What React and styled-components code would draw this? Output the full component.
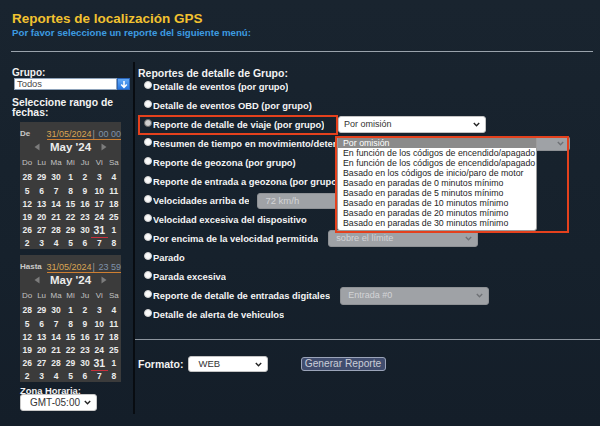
import React from 'react';
import styled, { createGlobalStyle } from 'styled-components';

const FONT = `"Liberation Sans", Arial, sans-serif`;

const GlobalStyle = createGlobalStyle`
  html, body { margin: 0; padding: 0; }
  body { background: #17222e; font-family: ${FONT}; }
  #root { width: 600px; height: 426px; }
`;

const Page = styled.div`
  width: 600px;
  height: 426px;
  overflow: hidden;
  background: linear-gradient(180deg, #19242f 0%, #16212c 60%, #141e29 100%);
  font-family: ${FONT};
`;

const Header = styled.header`
  padding: 11px 7px 0 12px;
`;

const Title = styled.h1`
  margin: 0;
  font: bold 13.5px/16px ${FONT};
  color: #f2c230;
`;

const Subtitle = styled.p`
  margin: 0;
  font: bold 9.7px/11px ${FONT};
  color: #3d9be0;
`;

const Rule = styled.div`
  margin: 13px 7px 0 11px;
  height: 1px;
  background: #9aa3ac;
`;

const Main = styled.div`
  display: grid;
  grid-template-columns: 133px 2px 1fr;
  margin-top: 10px;
  height: 352px;
`;

const Divider = styled.div`
  background: #080c11;
`;

/* ---------- left column ---------- */
const LeftCol = styled.aside`
  padding: 6px 0 0 12px;
  display: flex;
  flex-direction: column;
  align-items: flex-start;
`;

const SideLabel = styled.div`
  font: bold ${p => p.$fs || 10}px/${p => p.$lh || 10}px ${FONT};
  color: #f2f2f2;
  margin-top: ${p => p.$mt || 0}px;
  margin-left: ${p => p.$ml || 0}px;
`;

const GroupSelect = styled.div`
  display: flex;
  width: 116px;
  height: 12px;
  margin-left: 2px;
`;

const GroupField = styled.div`
  flex: 1;
  box-sizing: border-box;
  background: #fff;
  border: 1px solid #8fa3ba;
  font: 9.4px/10px ${FONT};
  color: #4a4a4a;
  padding-left: 2px;
`;

const GroupButton = styled.div`
  width: 13px;
  display: flex;
  align-items: center;
  justify-content: center;
  background: linear-gradient(180deg, #62a8f5 0%, #2576e0 100%);
  border: 1px solid #2a64b8;
  box-sizing: border-box;
`;

const CalBox = styled.div`
  width: 101px;
  height: 127px;
  margin: ${p => p.$mt}px 0 0 8px;
  background: #3b3b3b;
  display: flex;
  flex-direction: column;
`;

const CalHead = styled.div`
  height: 18px;
  flex: none;
  display: flex;
  align-items: flex-end;
`;

const CalHeadLabel = styled.span`
  width: 29px;
  font: bold 8px/10px ${FONT};
  color: #c9c9c9;
  padding-bottom: 1px;
`;

const DateField = styled.span`
  flex: 1;
  border-bottom: 1px solid #cf7f31;
  font: 9px/10px ${FONT};
  white-space: nowrap;
  color: #7f92aa;
`;

const DateText = styled.span`
  color: #d9a553;
`;

const Sep = styled.span`
  color: #9a9a9a;
  margin: 0 1px;
`;

const MonthRow = styled.div`
  height: 15px;
  flex: none;
  display: flex;
  align-items: center;
  justify-content: center;
  gap: 10px;
`;

const Month = styled.span`
  font: bold 11.5px/12px ${FONT};
  color: #ebebeb;
`;

const DayNames = styled.div`
  height: 16.5px;
  flex: none;
  display: grid;
  grid-template-columns: repeat(7, 1fr);
  align-items: center;
  text-align: center;
  font: 8px/10px ${FONT};
  color: #c2c2c2;
`;

const DateGrid = styled.div`
  display: grid;
  grid-template-columns: repeat(7, 1fr);
  grid-template-rows: repeat(6, 13.2px);
  text-align: center;
  font: bold 8.5px/13.2px ${FONT};
  color: #ececec;
`;

const DateCell = styled.span`
  position: relative;
  font-size: ${p => (p.$today ? 10.5 : 8.5)}px;
  &::after {
    content: '';
    display: ${p => (p.$today ? 'block' : 'none')};
    position: absolute;
    left: -1px;
    right: -1px;
    bottom: -1px;
    height: 1.5px;
    background: #c8303c;
  }
`;

const TzSelect = styled.div`
  box-sizing: border-box;
  width: 77px;
  height: 17px;
  margin: -1px 0 0 8px;
  background: #fff;
  border: 1px solid #c9c9c9;
  border-radius: 3px;
  display: flex;
  align-items: center;
  justify-content: space-between;
  padding: 0 5px 0 9px;
  font: 10px/1 ${FONT};
  color: #333;
`;

/* ---------- right column ---------- */
const RightCol = styled.section`
  padding-top: 6px;
  display: flex;
  flex-direction: column;
`;

const ReportTitle = styled.h2`
  margin: 0 0 -1px 3px;
  font: bold 10.5px/10px ${FONT};
  color: #f2f2f2;
`;

const Row = styled.div`
  height: 19px;
  flex: none;
  display: flex;
  align-items: center;
  padding-left: ${p => (p.$boxed ? 3 : 9)}px;
`;

const Highlight = styled.div`
  box-sizing: border-box;
  width: 200px;
  height: 20px;
  border: 2px solid #e4411d;
  display: flex;
  align-items: center;
  padding-left: 4px;
`;

const Radio = styled.span`
  flex: none;
  box-sizing: border-box;
  width: 8px;
  height: 8px;
  border-radius: 50%;
  margin-top: -3px;
  margin-right: 1px;
  background: ${p => (p.$dim ? '#cfcfcf' : '#fafafa')};
  border: 1px solid ${p => (p.$dim ? '#6a6a6a' : '#d0d0d0')};
`;

const RowLabel = styled.span`
  font: bold 9.4px/12px ${FONT};
  color: #f4f4f4;
  white-space: nowrap;
  overflow: hidden;
  ${p => (p.$clip ? `width: ${p.$clip}px; flex: none;` : '')}
`;

const FakeSelect = styled.div`
  box-sizing: border-box;
  flex: none;
  display: flex;
  align-items: center;
  justify-content: ${p => (p.$end ? 'flex-end' : 'space-between')};
  width: ${p => p.$w}px;
  height: ${p => p.$h}px;
  margin-left: ${p => p.$ml || 0}px;
  padding: 0 5px 0 ${p => p.$pl || 5}px;
  background: ${p => (p.$disabled ? '#9fa2a6' : '#ffffff')};
  color: ${p => (p.$disabled ? '#d3d4d6' : '#333')};
  border: 1px solid ${p => (p.$disabled ? '#8e9195' : '#c4c4c4')};
  border-radius: 3px;
  font: ${p => p.$fs || 9}px/1 ${FONT};
  white-space: nowrap;
`;

const SelectAnchor = styled.div`
  position: relative;
  flex: none;
`;

const OptionList = styled.ul`
  position: absolute;
  left: -1px;
  top: 21px;
  width: 200px;
  margin: 0;
  padding: 0 0 2px;
  list-style: none;
  background: #fff;
  border: 1px solid #9c9c9c;
  border-radius: 0 0 3px 3px;
  box-sizing: border-box;
  z-index: 2;
`;

const Option = styled.li`
  height: 10px;
  padding-left: 5px;
  font: 8.8px/10px ${FONT};
  white-space: nowrap;
  color: ${p => (p.$active ? '#ffffff' : '#1e1e1e')};
  background: ${p => (p.$active ? '#8b8b8b' : 'transparent')};
`;

const Callout = styled.div`
  position: absolute;
  left: -3px;
  top: 20px;
  width: 234px;
  height: 97px;
  border: 2px solid #e4411d;
  box-sizing: border-box;
  z-index: 3;
  pointer-events: none;
`;

const BottomRule = styled.div`
  height: 1px;
  flex: none;
  background: #8d959e;
  margin-top: 15px;
`;

const FormatRow = styled.div`
  display: flex;
  align-items: center;
  padding-left: 3px;
  margin-top: 16px;
  height: 16px;
`;

const FormatLabel = styled.span`
  font: bold 10.5px/12px ${FONT};
  color: #f2f2f2;
  margin-right: 4px;
`;

const Button = styled.button`
  box-sizing: border-box;
  height: 14px;
  width: 85px;
  margin-left: 33px;
  padding: 0;
  background: #414d6e;
  border: 1px solid #9ba4b9;
  border-radius: 3px;
  color: #c9ced8;
  font: 10.2px/12px ${FONT};
`;

/* ---------- icons ---------- */
const Chevron = ({ color = '#222' }) => (
  <svg width="7" height="5" viewBox="0 0 7 5">
    <path d="M0.8 1L3.5 3.7L6.2 1" fill="none" stroke={color} strokeWidth="1.4" />
  </svg>
);

const DownArrow = () => (
  <svg width="8" height="9" viewBox="0 0 8 9">
    <path d="M4 1V7M1.2 4.4L4 7.4L6.8 4.4" fill="none" stroke="#fff" strokeWidth="1.5" />
  </svg>
);

const Tri = ({ dir }) => (
  <svg width="6" height="8" viewBox="0 0 6 8">
    <path d={dir === 'l' ? 'M5.5 0.5L0.5 4L5.5 7.5Z' : 'M0.5 0.5L5.5 4L0.5 7.5Z'} fill="#7c7c7c" />
  </svg>
);

/* ---------- data ---------- */
const dayNames = ['Do', 'Lu', 'Ma', 'Mi', 'Ju', 'Vi', 'Sa'];
const dates = [
  28, 29, 30, 1, 2, 3, 4,
  5, 6, 7, 8, 9, 10, 11,
  12, 13, 14, 15, 16, 17, 18,
  19, 20, 21, 22, 23, 24, 25,
  26, 27, 28, 29, 30, 31, 1,
  2, 3, 4, 5, 6, 7, 8,
];

const options = [
  'Por omisión',
  'En función de los códigos de encendido/apagado',
  'En función de los códigos de encendido/apagado',
  'Basado en los códigos de inicio/paro de motor',
  'Basado en paradas de 0 minutos mínimo',
  'Basado en paradas de 5 minutos mínimo',
  'Basado en paradas de 10 minutos mínimo',
  'Basado en paradas de 20 minutos mínimo',
  'Basado en paradas de 30 minutos mínimo',
];

function Calendar({ label, date, time, mt }) {
  return (
    <CalBox $mt={mt}>
      <CalHead>
        <CalHeadLabel>{label}</CalHeadLabel>
        <DateField>
          <DateText>{date}</DateText>
          <Sep>|</Sep> {time}
        </DateField>
      </CalHead>
      <MonthRow>
        <Tri dir="l" />
        <Month>May '24</Month>
        <Tri dir="r" />
      </MonthRow>
      <DayNames>
        {dayNames.map(d => (
          <span key={d}>{d}</span>
        ))}
      </DayNames>
      <DateGrid>
        {dates.map((d, i) => (
          <DateCell key={i} $today={i === 33}>
            {d}
          </DateCell>
        ))}
      </DateGrid>
    </CalBox>
  );
}

function ReportRow({ label, children, clip }) {
  return (
    <Row>
      <Radio />
      <RowLabel $clip={clip}>{label}</RowLabel>
      {children}
    </Row>
  );
}

export default function App() {
  return (
    <Page>
      <GlobalStyle />
      <Header>
        <Title>Reportes de localización GPS</Title>
        <Subtitle>Por favor seleccione un reporte del siguiente menú:</Subtitle>
      </Header>
      <Rule />
      <Main>
        <LeftCol>
          <SideLabel>Grupo:</SideLabel>
          <GroupSelect>
            <GroupField>Todos</GroupField>
            <GroupButton>
              <DownArrow />
            </GroupButton>
          </GroupSelect>
          <SideLabel $fs={10.4} $lh={10.5} $mt={7.6}>
            Seleccione rango de fechas:
          </SideLabel>
          <Calendar label="De" date="31/05/2024" time="00 00" mt={3.4} />
          <Calendar label="Hasta" date="31/05/2024" time="23 59" mt={6} />
          <SideLabel $fs={9.4} $lh={9} $mt={4.5} $ml={8}>
            Zona Horaria:
          </SideLabel>
          <TzSelect>
            GMT-05:00 <Chevron />
          </TzSelect>
        </LeftCol>
        <Divider />
        <RightCol>
          <ReportTitle>Reportes de detalle de Grupo:</ReportTitle>
          <ReportRow label="Detalle de eventos (por grupo)" />
          <ReportRow label="Detalle de eventos OBD (por grupo)" />
          <Row $boxed>
            <Highlight>
              <Radio $dim />
              <RowLabel>Reporte de detalle de viaje (por grupo)</RowLabel>
            </Highlight>
            <SelectAnchor>
              <FakeSelect $w={148} $h={17} $fs={9} $pl={5}>
                Por omisión <Chevron />
              </FakeSelect>
              <OptionList>
                {options.map((o, i) => (
                  <Option key={i} $active={i === 0}>
                    {o}
                  </Option>
                ))}
              </OptionList>
              <Callout />
            </SelectAnchor>
          </Row>
          <ReportRow label="Resumen de tiempo en movimiento/detenido (por grupo)" clip={185}>
            <FakeSelect $w={232} $h={15} $end $disabled>
              <Chevron color="#6f7276" />
            </FakeSelect>
          </ReportRow>
          <ReportRow label="Reporte de geozona (por grupo)" />
          <ReportRow label="Reporte de entrada a geozona (por grupo)" />
          <ReportRow label="Velocidades arriba de">
            <FakeSelect $w={84} $h={16} $ml={8} $pl={7} $fs={9.5} $disabled>
              72 km/h
            </FakeSelect>
          </ReportRow>
          <ReportRow label="Velocidad excesiva del dispositivo" />
          <ReportRow label="Por encima de la velocidad permitida">
            <FakeSelect $w={150} $h={17} $ml={10} $pl={7} $fs={9.2} $disabled>
              sobre el límite <Chevron color="#6f7276" />
            </FakeSelect>
          </ReportRow>
          <ReportRow label="Parado" />
          <ReportRow label="Parada excesiva" />
          <ReportRow label="Reporte de detalle de entradas digitales">
            <FakeSelect $w={149} $h={18} $ml={10} $pl={7} $fs={9} $disabled>
              Entrada #0 <Chevron color="#6f7276" />
            </FakeSelect>
          </ReportRow>
          <ReportRow label="Detalle de alerta de vehiculos" />
          <BottomRule />
          <FormatRow>
            <FormatLabel>Formato:</FormatLabel>
            <FakeSelect $w={80} $h={16} $pl={10} $fs={9.5}>
              WEB <Chevron />
            </FakeSelect>
            <Button>Generar Reporte</Button>
          </FormatRow>
        </RightCol>
      </Main>
    </Page>
  );
}
